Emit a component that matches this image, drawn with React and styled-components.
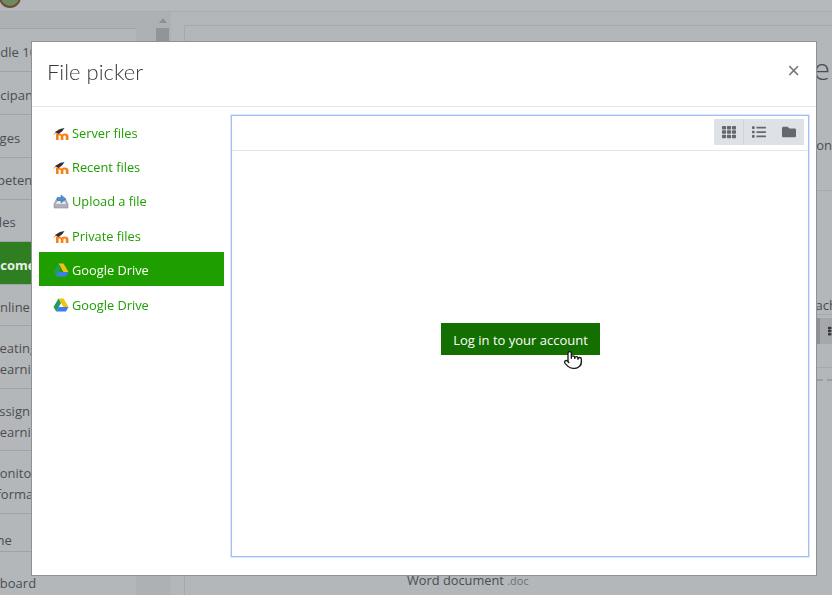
import { createGlobalStyle, styled } from 'styled-components'
import { FaFolder, FaList, FaTh } from 'react-icons/fa'
import { Pointer } from 'lucide-react'

const GlobalStyle = createGlobalStyle`
  html, body {
    margin: 0;
    height: 100%;
    overflow: hidden;
    background: #b4b7ba;
    font-family: "Open Sans", "Noto Sans", "Liberation Sans", sans-serif;
  }
`

const sideRows = [
  { lines: [['Moodle 101', -27]], height: 43, top: 28 },
  { lines: [['Participants', -28]], height: 43 },
  { lines: [['Badges', -24]], height: 43 },
  { lines: [['Competencies', -31]], height: 42 },
  { lines: [['Roles', -17]], height: 42 },
  { lines: [['Welcome', -24]], height: 43, active: true },
  { lines: [['Online Assignment', -10]], height: 41 },
  { lines: [['Creating', -14], ['Learning', -7]], height: 63 },
  { lines: [['Assigning', -9], ['Learning', -7]], height: 62 },
  { lines: [['Monitoring', -12], ['Performance', -24]], height: 63 },
  { lines: [['Home', -25]], height: 38, pad: 15 },
  { lines: [['Dashboard', -31]], height: 64, pad: 0 },
]

const sources = [
  { name: 'Server files', icon: 'moodle' },
  { name: 'Recent files', icon: 'moodle' },
  { name: 'Upload a file', icon: 'upload' },
  { name: 'Private files', icon: 'moodle' },
  { name: 'Google Drive', icon: 'drive', active: true },
  { name: 'Google Drive', icon: 'drive' },
]

const MoodleIcon = () => (
  <svg width="16" height="16" viewBox="0 0 16 16">
    <path d="M1 9.5 L3 7" stroke="#f98012" strokeWidth="1" fill="none" />
    <path
      d="M3 15 V8.5 H6.5 Q8 8.5 8.6 9.8 Q9.6 8.5 11.5 8.5 Q15.5 8.5 15.5 11.5 V15 H12.8 V11.6 Q12.8 10.6 11.6 10.6 Q10.4 10.6 10.4 11.6 V15 H7.8 V11.6 Q7.8 10.6 6.6 10.6 H5.6 V15 Z"
      fill="#f98012"
    />
    <path d="M2 7 L7 4 L11.5 3 L9 6.5 L5.5 9 Z" fill="#2f2f2f" />
  </svg>
)

const UploadIcon = () => (
  <svg width="16" height="16" viewBox="0 0 16 16">
    <path d="M1 11 L3.5 6 H12.5 L15 11 V15 H1 Z" fill="#aeb2b8" stroke="#8b8f96" strokeWidth="0.6" />
    <path d="M3 11 L4.5 8 H11.5 L13 11 Z" fill="#e6e8ec" />
    <path d="M4 4.5 H8 V2 L13 6 L8 10 V7.5 H4 Z" fill="#4f8fd0" stroke="#2f6aa8" strokeWidth="0.5" />
  </svg>
)

const DriveIcon = () => (
  <svg width="16" height="16" viewBox="0 0 16 16">
    <path d="M5.5 1.5 H10.5 L15.5 10 H10.5 Z" fill="#f4c20d" />
    <path d="M5.5 1.5 L8 6 L3.2 14.5 L0.5 10 Z" fill="#1e9e58" />
    <path d="M5.6 10 H15.5 L13 14.5 H3.2 Z" fill="#3c7df0" />
  </svg>
)

const icons = { moodle: MoodleIcon, upload: UploadIcon, drive: DriveIcon }

export default function App() {
  return (
    <>
      <GlobalStyle />
      <Page>
        <TopBar>
          <Logo />
        </TopBar>
        <Columns>
          <Side>
            <SideList>
              {sideRows.map((row) => (
                <SideRow
                  key={row.lines[0][0]}
                  $height={row.height}
                  $top={row.top}
                  $pad={row.pad}
                  $active={row.active}
                >
                  {row.lines.map(([text, left]) => (
                    <SideText key={text} $left={left} $active={row.active}>
                      {text}
                    </SideText>
                  ))}
                </SideRow>
              ))}
            </SideList>
            <Scrollbar>
              <ScrollArrow />
              <ScrollThumb />
            </Scrollbar>
          </Side>
          <Main>
            <MainCard>
              <PageHeading>Course</PageHeading>
              <MainLine $top={47}>Add a new section</MainLine>
              <Rule $top={36} />
              <MainLine $top={105} $right={-5}>
                Drag and drop files here to attach
              </MainLine>
              <Rule $top={0} />
              <AttachBar>
                <FaTh />
              </AttachBar>
              <Rule $top={23} />
              <DashedLine />
              <DocLabel>
                Word document <DocExt>.doc</DocExt>
              </DocLabel>
            </MainCard>
          </Main>
        </Columns>
      </Page>

      <Modal>
        <ModalHeader>
          <ModalTitle>File picker</ModalTitle>
          <CloseButton>×</CloseButton>
        </ModalHeader>
        <ModalBody>
          <SourceList>
            {sources.map((source, i) => {
              const Icon = icons[source.icon]
              return (
                <SourceItem key={i} $active={source.active}>
                  <Icon />
                  {source.name}
                </SourceItem>
              )
            })}
          </SourceList>
          <Panel>
            <PanelToolbar>
              <ViewButtons>
                <ViewButton $divider>
                  <FaTh />
                </ViewButton>
                <ViewButton>
                  <FaList />
                </ViewButton>
                <ViewButton>
                  <FaFolder />
                </ViewButton>
              </ViewButtons>
            </PanelToolbar>
            <PanelContent>
              <LoginWrap>
                <LoginButton>Log in to your account</LoginButton>
                <HandCursor>
                  <Pointer size={20} fill="#fff" color="#1a1a1a" strokeWidth={1.6} />
                </HandCursor>
              </LoginWrap>
            </PanelContent>
          </Panel>
        </ModalBody>
      </Modal>
    </>
  )
}

const Page = styled.div`
  width: 832px;
  height: 595px;
  display: flex;
  flex-direction: column;
  overflow: hidden;
  color: #4a4d52;
  font-size: 13px;
`

const TopBar = styled.div`
  height: 11px;
  flex: none;
  background: #b6b9bc;
  border-bottom: 1px solid #a9acaf;
  overflow: hidden;
`

const Logo = styled.div`
  width: 18px;
  height: 18px;
  margin: -14px 0 0 -1px;
  border-radius: 50%;
  background: #6f8a5e;
  border: 2px solid #6b4f35;
`

const Columns = styled.div`
  flex: 1;
  display: flex;
  min-height: 0;
`

const Side = styled.div`
  width: 171px;
  flex: none;
  display: flex;
  background: #aeb1b4;
  overflow: hidden;
`

const SideList = styled.div`
  width: 136px;
  flex: none;
`

const SideRow = styled.div`
  height: ${(props) => props.$height}px;
  margin-top: ${(props) => (props.$top ? props.$top - 12 : 0)}px;
  padding-top: ${(props) => props.$pad ?? 4}px;
  box-sizing: border-box;
  display: flex;
  flex-direction: column;
  justify-content: center;
  overflow: hidden;
  background: ${(props) => (props.$active ? '#2f7f22' : '#b4b7ba')};
  border-top: 1px solid #a0a3a6;
`

const SideText = styled.div`
  margin-left: ${(props) => props.$left}px;
  white-space: pre;
  line-height: 21px;
  color: ${(props) => (props.$active ? '#e8f0e6' : '#4a4d52')};
  font-weight: ${(props) => (props.$active ? 700 : 400)};
`

const Scrollbar = styled.div`
  width: 13px;
  margin-left: 20px;
  padding-top: 6px;
  display: flex;
  flex-direction: column;
  align-items: center;
`

const ScrollArrow = styled.div`
  width: 0;
  height: 0;
  border-left: 4px solid transparent;
  border-right: 4px solid transparent;
  border-bottom: 5px solid #8d9093;
`

const ScrollThumb = styled.div`
  width: 13px;
  height: 60px;
  margin-top: 5px;
  background: #929598;
`

const Main = styled.div`
  flex: 1;
  padding: 13px 0 0 13px;
  background: #b4b7ba;
  overflow: hidden;
`

const MainCard = styled.div`
  width: 700px;
  height: 600px;
  box-sizing: border-box;
  border: 1px solid #a6a9ac;
`

const PageHeading = styled.div`
  margin-top: 23px;
  width: 645px;
  height: 40px;
  font-size: 30px;
  font-weight: 300;
  line-height: 40px;
  text-align: right;
  white-space: nowrap;
`

const MainLine = styled.div`
  margin-top: ${(props) => props.$top}px;
  width: ${(props) => 647 - (props.$right || 0)}px;
  line-height: 18px;
  text-align: right;
  white-space: nowrap;
`

const Rule = styled.div`
  height: 1px;
  margin-top: ${(props) => props.$top}px;
  background: #a6a9ac;
`

const AttachBar = styled.div`
  height: 26px;
  margin: 3px 0 0 631px;
  padding-left: 8px;
  box-sizing: border-box;
  display: flex;
  align-items: center;
  background: #a5a8ab;
  border-left: 4px solid #8e9194;
  font-size: 10px;
  color: #3b3436;
`

const DashedLine = styled.div`
  margin: 11px 0 0 632px;
  border-top: 2px dashed #9a9da0;
`

const DocLabel = styled.div`
  margin: 190px 0 0 222px;
  font-size: 12.8px;
  line-height: 18px;
  white-space: nowrap;
`

const DocExt = styled.span`
  font-size: 11px;
  color: #6c7075;
`

const Modal = styled.div`
  position: fixed;
  left: 32px;
  top: 42px;
  width: 784px;
  height: 533px;
  display: flex;
  flex-direction: column;
  background: #fff;
  box-shadow: 0 0 0 1px #8f9295;
`

const ModalHeader = styled.div`
  height: 65px;
  flex: none;
  box-sizing: border-box;
  display: flex;
  align-items: center;
  justify-content: space-between;
  padding: 0 16px 6px 15px;
  border-bottom: 1px solid #e6e6e6;
`

const ModalTitle = styled.div`
  font-family: "Lato", "Open Sans", sans-serif;
  font-size: 22px;
  font-weight: 300;
  color: #373a3c;
`

const CloseButton = styled.div`
  font-family: "Liberation Sans", sans-serif;
  font-size: 22px;
  line-height: 22px;
  color: #777;
`

const ModalBody = styled.div`
  flex: 1;
  display: flex;
  align-items: flex-start;
  padding: 8px 7px 0 7px;
`

const SourceList = styled.div`
  width: 185px;
  flex: none;
  margin-top: -1px;
  margin-right: 7px;
`

const SourceItem = styled.div`
  height: 34.4px;
  box-sizing: border-box;
  display: flex;
  align-items: center;
  gap: 3px;
  padding: 3px 0 0 14px;
  font-size: 12.8px;
  color: ${(props) => (props.$active ? '#fff' : '#1f9e00')};
  background: ${(props) => (props.$active ? '#1f9e00' : 'transparent')};
`

const Panel = styled.div`
  width: 578px;
  height: 442px;
  flex: none;
  box-sizing: border-box;
  display: flex;
  flex-direction: column;
  border: 1px solid #9fc0fa;
  box-shadow: 0 0 0 1px #dce7fb;
`

const PanelToolbar = styled.div`
  height: 35px;
  flex: none;
  display: flex;
  justify-content: flex-end;
  align-items: flex-start;
  padding: 3px 4px 0 0;
  box-sizing: border-box;
  border-bottom: 1px solid #e6e6e6;
`

const ViewButtons = styled.div`
  display: flex;
  background: #dee2e6;
`

const ViewButton = styled.div`
  width: 30px;
  height: 26px;
  display: flex;
  align-items: center;
  justify-content: center;
  font-size: 14px;
  color: #65686c;
  box-sizing: border-box;
  border-right: ${(props) => (props.$divider ? '1px solid #cfd3d7' : 'none')};
`

const PanelContent = styled.div`
  flex: 1;
  display: flex;
  justify-content: center;
  padding-top: 172px;
`

const LoginWrap = styled.div`
  position: relative;
  height: 32px;
  margin-left: 1px;
`

const LoginButton = styled.div`
  width: 159px;
  height: 32px;
  box-sizing: border-box;
  padding-top: 1px;
  display: flex;
  align-items: center;
  justify-content: center;
  background: #137000;
  color: #fff;
  font-size: 13px;
  white-space: nowrap;
`

const HandCursor = styled.div`
  position: absolute;
  left: 122px;
  top: 27px;
  line-height: 0;
`
